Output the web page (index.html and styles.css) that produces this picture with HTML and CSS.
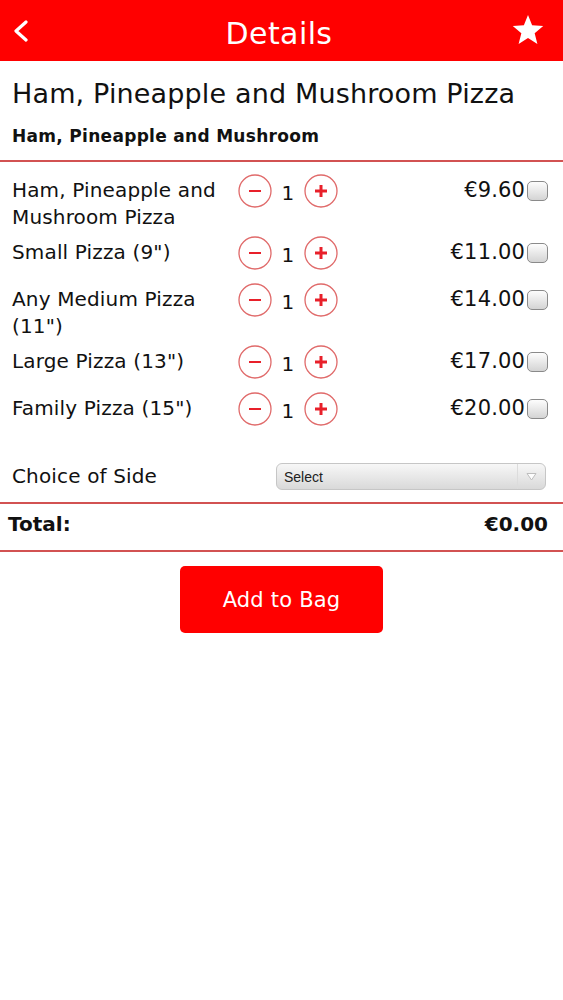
FILE: index.html
```html
<!DOCTYPE html>
<html lang="en">
<head>
    <meta charset="UTF-8">
    <meta name="viewport" content="width=device-width, initial-scale=1.0">
    <title>Details</title>
    <link rel="stylesheet" href="styles.css">
</head>
<body>
    <div class="topbar">
        <a class="back" href="#">
            <svg width="16" height="22" viewBox="0 0 16 22"><polyline points="13,2 3,11 13,20" fill="none" stroke="#fff" stroke-width="3.2" stroke-linecap="round" stroke-linejoin="round"/></svg>
        </a>
        <h1>Details</h1>
        <a class="fav" href="#">
            <svg width="34" height="32" viewBox="0 0 34 32"><polygon points="17,1 21.12,11.34 32.22,12.06 23.66,19.16 26.4,29.94 17,24 7.6,29.94 10.34,19.16 1.78,12.06 12.88,11.34" fill="#fff"/></svg>
        </a>
    </div>

    <div class="product">
        <h2>Ham, Pineapple and Mushroom Pizza</h2>
        <h3>Ham, Pineapple and Mushroom</h3>
    </div>

    <div class="options">
        <div class="option">
            <div class="option-name">Ham, Pineapple and Mushroom Pizza</div>
            <div class="stepper">
                <button class="step"><svg width="34" height="34" viewBox="0 0 34 34"><circle cx="17" cy="17" r="16" fill="none" stroke="#e06a6a" stroke-width="1.3"/><line x1="11" y1="17" x2="23" y2="17" stroke="#e8202a" stroke-width="2"/></svg></button>
                <span class="qty">1</span>
                <button class="step"><svg width="34" height="34" viewBox="0 0 34 34"><circle cx="17" cy="17" r="16" fill="none" stroke="#e06a6a" stroke-width="1.3"/><line x1="11" y1="17" x2="23" y2="17" stroke="#e8202a" stroke-width="3"/><line x1="17" y1="11" x2="17" y2="23" stroke="#e8202a" stroke-width="3"/></svg></button>
            </div>
            <div class="price">€9.60</div>
            <input type="checkbox" class="check">
        </div>
        <div class="option">
            <div class="option-name">Small Pizza (9")</div>
            <div class="stepper">
                <button class="step"><svg width="34" height="34" viewBox="0 0 34 34"><circle cx="17" cy="17" r="16" fill="none" stroke="#e06a6a" stroke-width="1.3"/><line x1="11" y1="17" x2="23" y2="17" stroke="#e8202a" stroke-width="2"/></svg></button>
                <span class="qty">1</span>
                <button class="step"><svg width="34" height="34" viewBox="0 0 34 34"><circle cx="17" cy="17" r="16" fill="none" stroke="#e06a6a" stroke-width="1.3"/><line x1="11" y1="17" x2="23" y2="17" stroke="#e8202a" stroke-width="3"/><line x1="17" y1="11" x2="17" y2="23" stroke="#e8202a" stroke-width="3"/></svg></button>
            </div>
            <div class="price">€11.00</div>
            <input type="checkbox" class="check">
        </div>
        <div class="option">
            <div class="option-name">Any Medium Pizza (11")</div>
            <div class="stepper">
                <button class="step"><svg width="34" height="34" viewBox="0 0 34 34"><circle cx="17" cy="17" r="16" fill="none" stroke="#e06a6a" stroke-width="1.3"/><line x1="11" y1="17" x2="23" y2="17" stroke="#e8202a" stroke-width="2"/></svg></button>
                <span class="qty">1</span>
                <button class="step"><svg width="34" height="34" viewBox="0 0 34 34"><circle cx="17" cy="17" r="16" fill="none" stroke="#e06a6a" stroke-width="1.3"/><line x1="11" y1="17" x2="23" y2="17" stroke="#e8202a" stroke-width="3"/><line x1="17" y1="11" x2="17" y2="23" stroke="#e8202a" stroke-width="3"/></svg></button>
            </div>
            <div class="price">€14.00</div>
            <input type="checkbox" class="check">
        </div>
        <div class="option">
            <div class="option-name">Large Pizza (13")</div>
            <div class="stepper">
                <button class="step"><svg width="34" height="34" viewBox="0 0 34 34"><circle cx="17" cy="17" r="16" fill="none" stroke="#e06a6a" stroke-width="1.3"/><line x1="11" y1="17" x2="23" y2="17" stroke="#e8202a" stroke-width="2"/></svg></button>
                <span class="qty">1</span>
                <button class="step"><svg width="34" height="34" viewBox="0 0 34 34"><circle cx="17" cy="17" r="16" fill="none" stroke="#e06a6a" stroke-width="1.3"/><line x1="11" y1="17" x2="23" y2="17" stroke="#e8202a" stroke-width="3"/><line x1="17" y1="11" x2="17" y2="23" stroke="#e8202a" stroke-width="3"/></svg></button>
            </div>
            <div class="price">€17.00</div>
            <input type="checkbox" class="check">
        </div>
        <div class="option">
            <div class="option-name">Family Pizza (15")</div>
            <div class="stepper">
                <button class="step"><svg width="34" height="34" viewBox="0 0 34 34"><circle cx="17" cy="17" r="16" fill="none" stroke="#e06a6a" stroke-width="1.3"/><line x1="11" y1="17" x2="23" y2="17" stroke="#e8202a" stroke-width="2"/></svg></button>
                <span class="qty">1</span>
                <button class="step"><svg width="34" height="34" viewBox="0 0 34 34"><circle cx="17" cy="17" r="16" fill="none" stroke="#e06a6a" stroke-width="1.3"/><line x1="11" y1="17" x2="23" y2="17" stroke="#e8202a" stroke-width="3"/><line x1="17" y1="11" x2="17" y2="23" stroke="#e8202a" stroke-width="3"/></svg></button>
            </div>
            <div class="price">€20.00</div>
            <input type="checkbox" class="check">
        </div>
    </div>

    <div class="side-row">
        <label for="side">Choice of Side</label>
        <div class="select-box">
            <select id="side">
                <option>Select</option>
            </select>
            <span class="select-arrow">
                <svg width="11" height="9" viewBox="0 0 11 9"><polygon points="1,1.5 10,1.5 5.5,8" fill="#fdfdfd" stroke="#bdbdbd" stroke-width="1"/></svg>
            </span>
        </div>
    </div>

    <div class="total-row">
        <span>Total:</span>
        <span>€0.00</span>
    </div>

    <div class="actions">
        <button class="btn-bag">Add to Bag</button>
    </div>
</body>
</html>
```

FILE: styles.css
```css
* {
    margin: 0;
    padding: 0;
    box-sizing: border-box;
    font-family: 'DejaVu Sans', Verdana, sans-serif;
}

:root {
    --primary-color: #ff0000;
    --line-color: #d25252;
    --text-color: #111;
}

body {
    background-color: #fff;
    color: var(--text-color);
}

.topbar {
    height: 61px;
    background-color: var(--primary-color);
    display: grid;
    grid-template-columns: 1fr auto 1fr;
    align-items: center;
    padding: 6px 18px 0 13px;
}

.topbar h1 {
    color: #fff;
    font-size: 30px;
    font-weight: normal;
    line-height: 55px;
    letter-spacing: 0.4px;
}

.back {
    justify-self: start;
    display: flex;
    margin-top: -6px;
}

.fav {
    justify-self: end;
    display: flex;
    margin-top: -7px;
}

.product {
    padding: 17px 12px 13px;
    border-bottom: 2px solid var(--line-color);
}

.product h2 {
    font-size: 27px;
    font-weight: normal;
    line-height: 32px;
    letter-spacing: 0.15px;
}

.product h3 {
    font-size: 17px;
    font-weight: bold;
    line-height: 22px;
    margin-top: 15px;
    letter-spacing: 0.3px;
}

.options {
    padding-top: 11px;
}

.option {
    display: grid;
    grid-template-columns: 226px auto 1fr auto;
    align-items: start;
    min-height: 47px;
    padding: 4px 15px 4px 12px;
    font-size: 20px;
    line-height: 27px;
    letter-spacing: 0.15px;
}

.stepper {
    display: flex;
    align-items: flex-start;
    margin-top: -3px;
}

.step {
    width: 34px;
    height: 34px;
    border: none;
    background: none;
    display: flex;
    cursor: pointer;
}

.qty {
    width: 32px;
    text-align: center;
    padding-top: 6px;
    font-size: 20px;
}

.price {
    text-align: right;
    font-size: 21px;
}

.check {
    appearance: none;
    width: 21px;
    height: 20px;
    margin: 4px 0 0 2px;
    border: 1px solid #8a8a8a;
    border-radius: 5px;
    background: linear-gradient(#fdfdfd, #d4d4d4);
}

.side-row {
    display: grid;
    grid-template-columns: 264px 1fr;
    align-items: center;
    padding: 25px 17px 12px 12px;
    font-size: 20px;
    line-height: 27px;
    letter-spacing: 0.15px;
    border-bottom: 2px solid var(--line-color);
}

.select-box {
    display: flex;
    height: 27px;
    border: 1px solid #c6c6c6;
    border-radius: 6px;
    background: linear-gradient(#f7f7f7, #d9d9d9);
    overflow: hidden;
}

.select-box select {
    flex: 1;
    appearance: none;
    border: none;
    background: transparent;
    padding-left: 7px;
    font-family: 'Liberation Sans', Arial, sans-serif;
    font-size: 14px;
    color: #222;
    outline: none;
}

.select-arrow {
    width: 28px;
    border-left: 1px solid #dcdcdc;
    display: flex;
    align-items: center;
    justify-content: center;
}

.total-row {
    display: flex;
    justify-content: space-between;
    padding: 8px 15px 14px 8px;
    font-size: 20px;
    font-weight: bold;
    line-height: 24px;
    border-bottom: 2px solid var(--line-color);
}

.actions {
    display: flex;
    justify-content: center;
    padding-top: 14px;
}

.btn-bag {
    width: 203px;
    height: 67px;
    background-color: var(--primary-color);
    color: #fff;
    border: none;
    border-radius: 5px;
    font-size: 21px;
    letter-spacing: 0.2px;
    cursor: pointer;
}
```
